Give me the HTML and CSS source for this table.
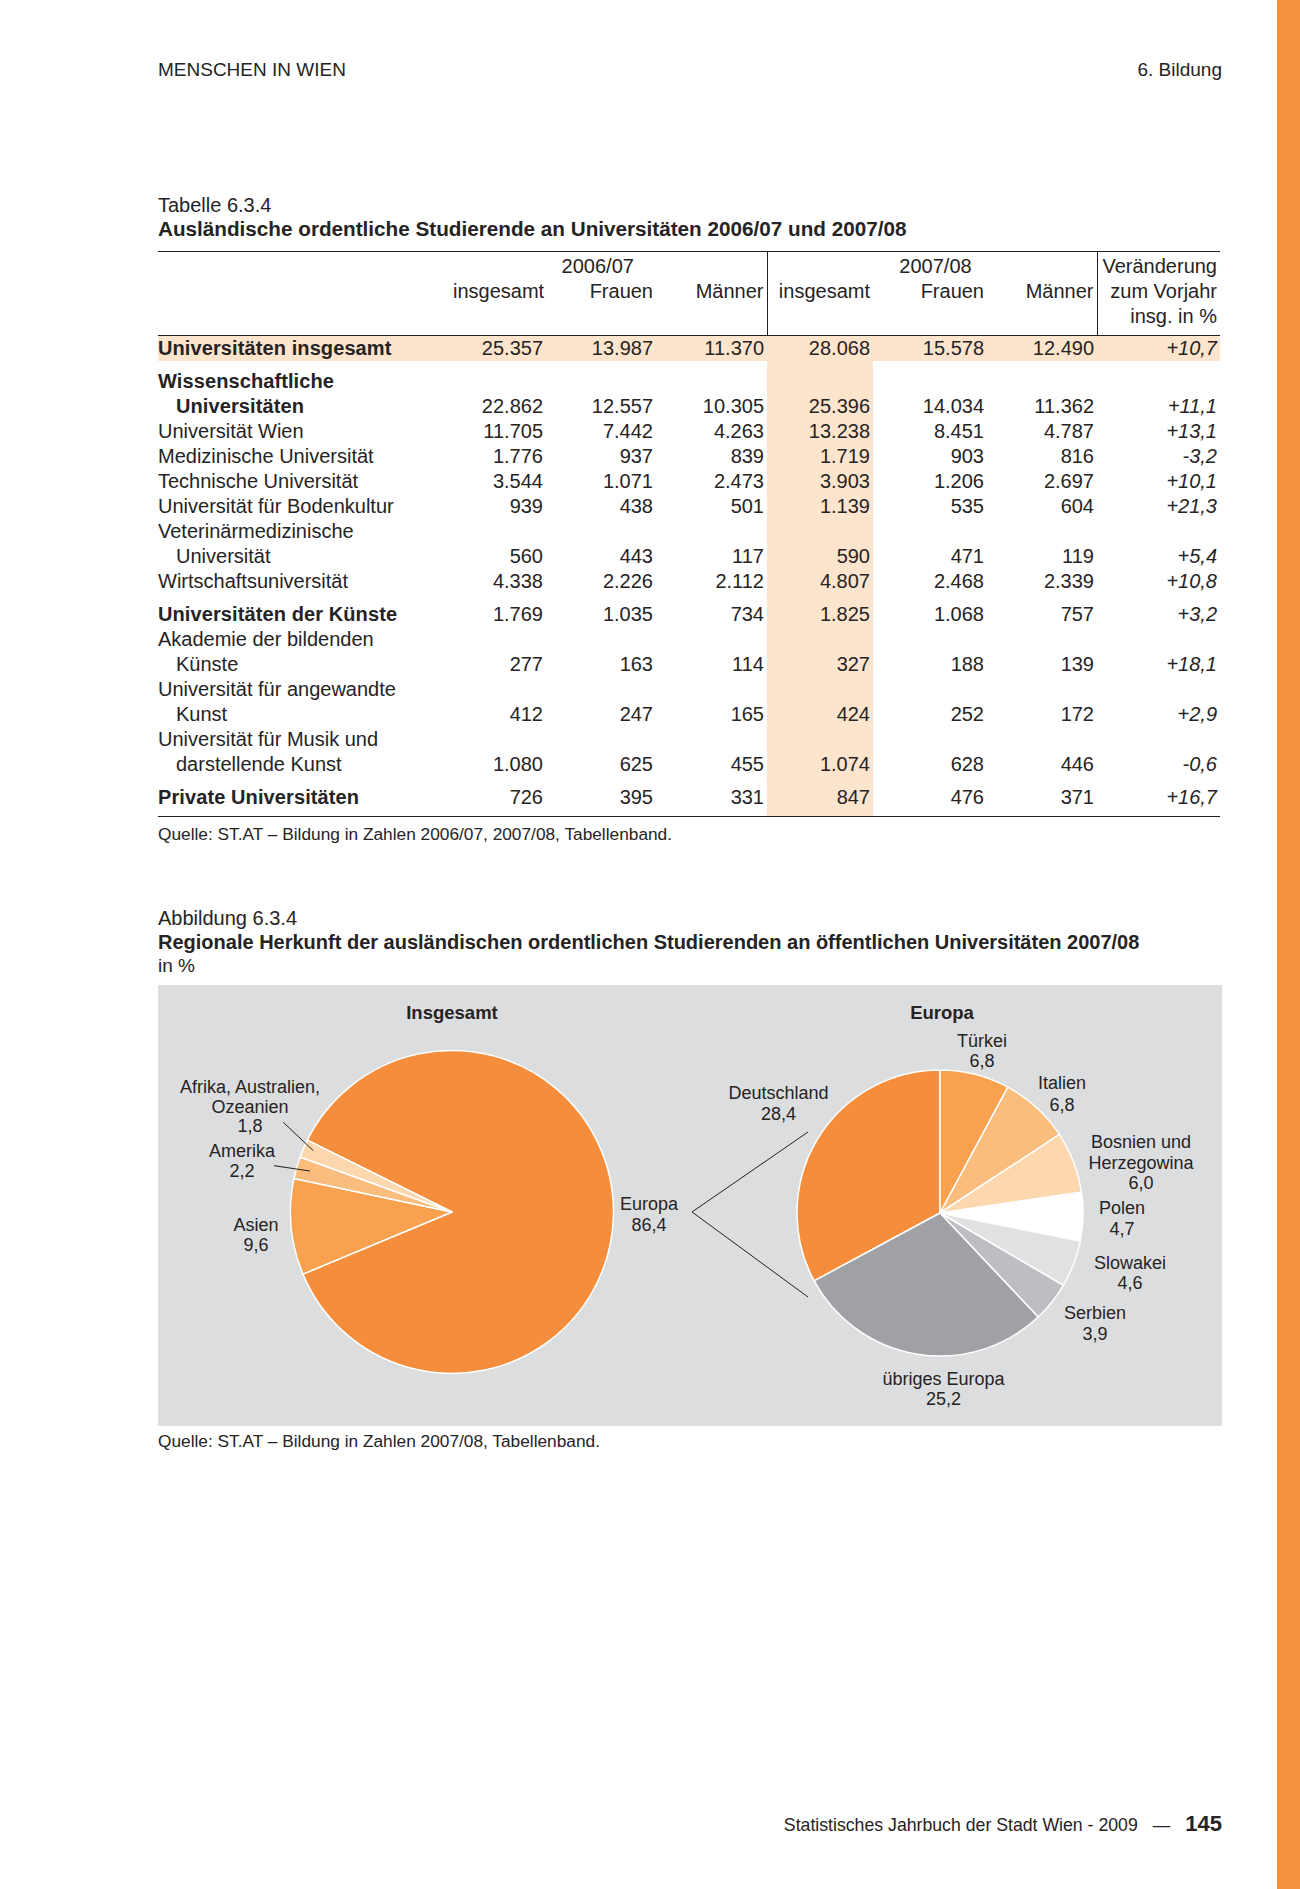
FILE: index.html
```html
<!DOCTYPE html>
<html lang="de">
<head>
<meta charset="utf-8">
<title>Menschen in Wien – 6. Bildung</title>
<link rel="stylesheet" href="styles.css">
</head>
<body>
<div class="page">
  <main class="main">
    <header class="page-header">
      <span>MENSCHEN IN WIEN</span>
      <span>6. Bildung</span>
    </header>

    <section class="table-block">
      <div class="cap-label">Tabelle 6.3.4</div>
      <div class="cap-title tbl-title">Ausländische ordentliche Studierende an Universitäten 2006/07 und 2007/08</div>
      <table class="data">
        <colgroup>
          <col class="c-label"><col class="c1"><col class="c2"><col class="c3"><col class="c4"><col class="c5"><col class="c6"><col class="c7">
        </colgroup>
        <thead>
          <tr class="hr-a">
            <th></th>
            <th colspan="3" class="grp grp-a vl">2006/07</th>
            <th colspan="3" class="grp grp-b vl">2007/08</th>
            <th class="num">Veränderung</th>
          </tr>
          <tr>
            <th></th>
            <th class="num">insgesamt</th><th class="num">Frauen</th><th class="num vl">Männer</th>
            <th class="num">insgesamt</th><th class="num">Frauen</th><th class="num vl">Männer</th>
            <th class="num">zum Vorjahr</th>
          </tr>
          <tr class="hr-c">
            <th></th><th></th><th></th><th class="vl"></th><th></th><th></th><th class="vl"></th>
            <th class="num">insg. in %</th>
          </tr>
        </thead>
        <tbody>
          <tr class="total">
            <td class="b">Universitäten insgesamt</td><td>25.357</td><td>13.987</td><td>11.370</td><td class="sh">28.068</td><td>15.578</td><td>12.490</td><td class="pct">+10,7</td>
          </tr>
          <tr class="sec">
            <td class="b">Wissenschaftliche</td><td></td><td></td><td></td><td class="sh"></td><td></td><td></td><td></td>
          </tr>
          <tr>
            <td class="b ind">Universitäten</td><td>22.862</td><td>12.557</td><td>10.305</td><td class="sh">25.396</td><td>14.034</td><td>11.362</td><td class="pct">+11,1</td>
          </tr>
          <tr>
            <td>Universität Wien</td><td>11.705</td><td>7.442</td><td>4.263</td><td class="sh">13.238</td><td>8.451</td><td>4.787</td><td class="pct">+13,1</td>
          </tr>
          <tr>
            <td>Medizinische Universität</td><td>1.776</td><td>937</td><td>839</td><td class="sh">1.719</td><td>903</td><td>816</td><td class="pct">-3,2</td>
          </tr>
          <tr>
            <td>Technische Universität</td><td>3.544</td><td>1.071</td><td>2.473</td><td class="sh">3.903</td><td>1.206</td><td>2.697</td><td class="pct">+10,1</td>
          </tr>
          <tr>
            <td>Universität für Bodenkultur</td><td>939</td><td>438</td><td>501</td><td class="sh">1.139</td><td>535</td><td>604</td><td class="pct">+21,3</td>
          </tr>
          <tr>
            <td>Veterinärmedizinische</td><td></td><td></td><td></td><td class="sh"></td><td></td><td></td><td></td>
          </tr>
          <tr>
            <td class="ind">Universität</td><td>560</td><td>443</td><td>117</td><td class="sh">590</td><td>471</td><td>119</td><td class="pct">+5,4</td>
          </tr>
          <tr>
            <td>Wirtschaftsuniversität</td><td>4.338</td><td>2.226</td><td>2.112</td><td class="sh">4.807</td><td>2.468</td><td>2.339</td><td class="pct">+10,8</td>
          </tr>
          <tr class="sec">
            <td class="b">Universitäten der Künste</td><td>1.769</td><td>1.035</td><td>734</td><td class="sh">1.825</td><td>1.068</td><td>757</td><td class="pct">+3,2</td>
          </tr>
          <tr>
            <td>Akademie der bildenden</td><td></td><td></td><td></td><td class="sh"></td><td></td><td></td><td></td>
          </tr>
          <tr>
            <td class="ind">Künste</td><td>277</td><td>163</td><td>114</td><td class="sh">327</td><td>188</td><td>139</td><td class="pct">+18,1</td>
          </tr>
          <tr>
            <td>Universität für angewandte</td><td></td><td></td><td></td><td class="sh"></td><td></td><td></td><td></td>
          </tr>
          <tr>
            <td class="ind">Kunst</td><td>412</td><td>247</td><td>165</td><td class="sh">424</td><td>252</td><td>172</td><td class="pct">+2,9</td>
          </tr>
          <tr>
            <td>Universität für Musik und</td><td></td><td></td><td></td><td class="sh"></td><td></td><td></td><td></td>
          </tr>
          <tr>
            <td class="ind">darstellende Kunst</td><td>1.080</td><td>625</td><td>455</td><td class="sh">1.074</td><td>628</td><td>446</td><td class="pct">-0,6</td>
          </tr>
          <tr class="sec last">
            <td class="b">Private Universitäten</td><td>726</td><td>395</td><td>331</td><td class="sh">847</td><td>476</td><td>371</td><td class="pct">+16,7</td>
          </tr>
        </tbody>
      </table>
      <div class="source">Quelle: ST.AT – Bildung in Zahlen 2006/07, 2007/08, Tabellenband.</div>
    </section>

    <section class="figure-block">
      <div class="cap-label">Abbildung 6.3.4</div>
      <div class="cap-title">Regionale Herkunft der ausländischen ordentlichen Studierenden an öffentlichen Universitäten 2007/08</div>
      <div class="cap-unit">in %</div>
      <div class="chart">
        <svg class="chart-svg" width="1064" height="441" viewBox="0 0 1064 441" xmlns="http://www.w3.org/2000/svg">
          <!-- Left pie: Insgesamt -->
          <g class="slices">
            <path class="s-europa" d="M294,227 L149.3,155.2 A161.5,161.5 0 1,1 144.9,289.1 Z"/>
            <path class="s-asien" d="M294,227 L144.9,289.1 A161.5,161.5 0 0,1 136.0,193.4 Z"/>
            <path class="s-amerika" d="M294,227 L136.0,193.4 A161.5,161.5 0 0,1 142.1,172.0 Z"/>
            <path class="s-afrika" d="M294,227 L142.1,172.0 A161.5,161.5 0 0,1 149.3,155.2 Z"/>
          </g>
          <!-- Right pie: Europa -->
          <g class="slices">
            <path class="s-europa" d="M782,228 L656.13,295.87 A143,143 0 0,1 782,85 Z"/>
            <path class="s-asien" d="M782,228 L782,85 A143,143 0 0,1 849.87,102.13 Z"/>
            <path class="s-amerika" d="M782,228 L849.87,102.13 A143,143 0 0,1 901.48,149.44 Z"/>
            <path class="s-afrika" d="M782,228 L901.48,149.44 A143,143 0 0,1 923.49,207.28 Z"/>
            <path class="s-polen" d="M782,228 L923.49,207.28 A143,143 0 0,1 922.25,255.9 Z"/>
            <path class="s-slowakei" d="M782,228 L922.25,255.9 A143,143 0 0,1 905.31,300.4 Z"/>
            <path class="s-serbien" d="M782,228 L905.31,300.4 A143,143 0 0,1 880.13,332.02 Z"/>
            <path class="s-uebrige" d="M782,228 L880.13,332.02 A143,143 0 0,1 656.13,295.87 Z"/>
          </g>
          <g class="leaders">
            <line x1="125.3" y1="137.3" x2="155.3" y2="165.7"/>
            <line x1="116" y1="180.7" x2="152" y2="186"/>
            <polyline points="650,147 534,227 650,312"/>
          </g>
          <g class="labels">
            <text class="ttl" x="294" y="34">Insgesamt</text>
            <text x="92" y="107.5">Afrika, Australien,</text>
            <text x="92" y="127.5">Ozeanien</text>
            <text x="92" y="146.5">1,8</text>
            <text x="84" y="171.5">Amerika</text>
            <text x="84" y="191.5">2,2</text>
            <text x="98" y="246">Asien</text>
            <text x="98" y="266">9,6</text>
            <text x="491" y="225">Europa</text>
            <text x="491" y="245.5">86,4</text>

            <text class="ttl" x="784" y="34">Europa</text>
            <text x="824" y="61.5">Türkei</text>
            <text x="824" y="82">6,8</text>
            <text x="904" y="104">Italien</text>
            <text x="904" y="125.5">6,8</text>
            <text x="620.5" y="114">Deutschland</text>
            <text x="620.5" y="135">28,4</text>
            <text x="983" y="163">Bosnien und</text>
            <text x="983" y="184">Herzegowina</text>
            <text x="983" y="204">6,0</text>
            <text x="964" y="229">Polen</text>
            <text x="964" y="250">4,7</text>
            <text x="972" y="284">Slowakei</text>
            <text x="972" y="304">4,6</text>
            <text x="937" y="334">Serbien</text>
            <text x="937" y="355">3,9</text>
            <text x="785.5" y="400">übriges Europa</text>
            <text x="785.5" y="420">25,2</text>
          </g>
        </svg>
      </div>
      <div class="source fig-source">Quelle: ST.AT – Bildung in Zahlen 2007/08, Tabellenband.</div>
    </section>

    <footer class="page-footer">
      <span class="ft-text">Statistisches Jahrbuch der Stadt Wien - 2009</span>
      <span class="ft-dash">—</span>
      <span class="ft-num">145</span>
    </footer>
  </main>
  <aside class="stripe"></aside>
</div>
</body>
</html>
```

FILE: styles.css
```css
html, body {
  margin: 0;
  padding: 0;
  background: #ffffff;
}

body {
  font-family: "Liberation Sans", Arial, Helvetica, sans-serif;
  color: #262324;
}

.page {
  display: flex;
  width: 1300px;
  height: 1889px;
}

.main {
  flex: 0 0 1275px;
  box-sizing: border-box;
  padding: 0 55px 0 158px;
  display: flex;
  flex-direction: column;
}

.stripe {
  flex: 0 0 25px;
  background: #f6923f;
}

/* Header */
.page-header {
  margin-top: 58px;
  display: flex;
  justify-content: space-between;
  font-size: 19px;
  line-height: 24px;
}

/* Captions */
.table-block {
  margin-top: 111px;
}

.cap-label {
  font-size: 20px;
  line-height: 24px;
}

.cap-title {
  font-size: 20px;
  line-height: 24px;
  font-weight: bold;
}

.cap-title.tbl-title {
  font-size: 20.7px;
}

.cap-unit {
  font-size: 19px;
  line-height: 24px;
}

/* Table */
.data {
  margin-top: 10px;
  width: 1062px;
  table-layout: fixed;
  border-collapse: collapse;
  font-size: 20px;
  line-height: 25px;
}

.c-label { width: 295px; }
.c1 { width: 93px; }
.c2 { width: 110px; }
.c3 { width: 111px; }
.c4 { width: 106px; }
.c5 { width: 114px; }
.c6 { width: 110px; }
.c7 { width: 123px; }

.data th {
  font-weight: normal;
  padding: 0 3px 0 0;
  white-space: nowrap;
}

.data thead tr.hr-a th {
  border-top: 1px solid #231f20;
  padding-top: 2px;
}

.data thead tr.hr-c th {
  border-bottom: 1px solid #231f20;
  padding-bottom: 6px;
}

.data th.num {
  text-align: right;
}

.data th.grp-a {
  text-align: center;
  padding-right: 24px;
}

.data th.grp-b {
  text-align: center;
  padding-left: 10px;
}

.data .vl {
  border-right: 1px solid #231f20;
}

.data td {
  padding: 0 3px 0 0;
  text-align: right;
  white-space: nowrap;
}

.data td:first-child {
  text-align: left;
  padding: 0;
}

.data td.ind {
  padding-left: 18px;
}

.data td.b {
  font-weight: bold;
  letter-spacing: 0.1px;
}

.data td.pct {
  font-style: italic;
}

.data td.sh {
  background: #fde4cd;
}

.data tr.total td {
  background: #fde4cd;
}

.data tr.sec td {
  padding-top: 8px;
}

.data tr.last td {
  padding-bottom: 6px;
  border-bottom: 1px solid #231f20;
}

.source {
  margin-top: 7px;
  font-size: 17.3px;
  line-height: 20px;
}

/* Figure */
.figure-block {
  margin-top: 62px;
}

.chart {
  margin-top: 7px;
  width: 1064px;
  height: 441px;
  background: #dcdddf;
}

.chart-svg {
  display: block;
}

.slices path {
  stroke: #ffffff;
  stroke-width: 1.5;
  stroke-linejoin: round;
}

.s-europa { fill: #f58e3c; }
.s-asien { fill: #f8a14e; }
.s-amerika { fill: #fbbd7e; }
.s-afrika { fill: #fdd7ad; }
.s-polen { fill: #ffffff; }
.s-slowakei { fill: #e0e1e3; }
.s-serbien { fill: #bdbec1; }
.s-uebrige { fill: #a0a1a4; }

.leaders line,
.leaders polyline {
  stroke: #231f20;
  stroke-width: 1;
  fill: none;
}

.labels text {
  font-family: "Liberation Sans", Arial, Helvetica, sans-serif;
  font-size: 18px;
  fill: #262324;
  text-anchor: middle;
}

.labels text.ttl {
  font-weight: bold;
  font-size: 18.5px;
}

.fig-source {
  margin-top: 5px;
}

/* Footer */
.page-footer {
  margin-top: auto;
  padding-bottom: 50px;
  display: flex;
  justify-content: flex-end;
  align-items: baseline;
  gap: 15px;
  line-height: 28px;
}

.ft-text {
  font-size: 17.7px;
}

.ft-dash {
  font-size: 17.5px;
}

.ft-num {
  font-size: 22px;
  font-weight: bold;
}
```
